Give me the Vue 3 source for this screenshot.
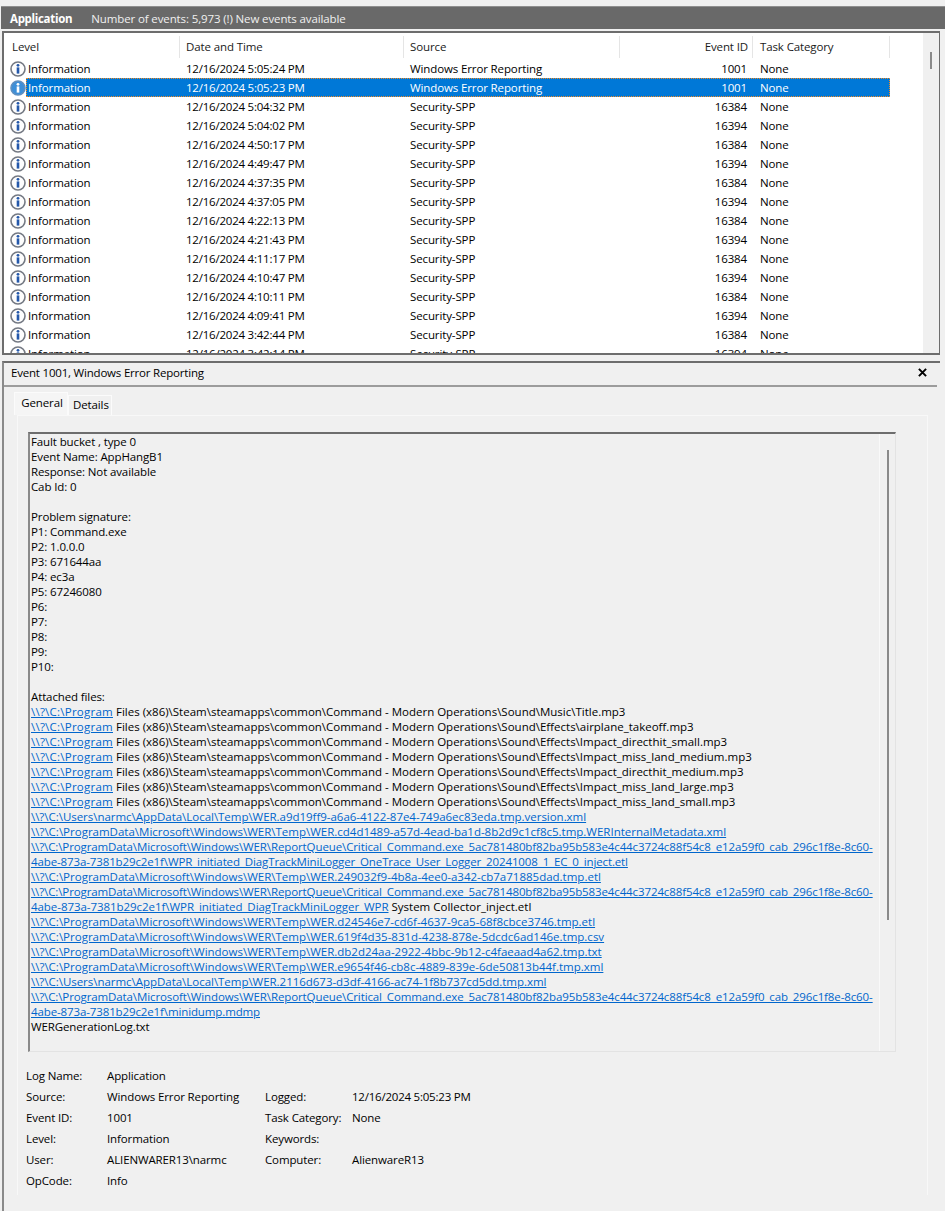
<template>
  <div class="viewer">
    <div class="log-bar">
      <strong>Application</strong>
      <span>Number of events: 5,973 (!) New events available</span>
    </div>

    <div class="list-box">
      <div class="list-main">
        <div class="list-head">
          <div class="col level">Level</div>
          <div class="col date">Date and Time</div>
          <div class="col source">Source</div>
          <div class="col id">Event ID</div>
          <div class="col task">Task Category</div>
        </div>
        <div class="list-rows">
          <div v-for="(e, i) in events" :key="i" class="row" :class="{ selected: i === 1 }">
            <svg class="info" viewBox="0 0 16 16" width="16" height="16">
              <circle cx="8" cy="8" r="7" class="info-ring" />
              <circle cx="8" cy="4.3" r="1.4" class="info-i" />
              <rect x="6.7" y="6.4" width="2.6" height="6.2" class="info-i" />
            </svg>
            <div class="cells">
              <div class="col level-text">Information</div>
              <div class="col date stamp">12/16/2024 {{ e.time }} PM</div>
              <div class="col source">{{ e.source }}</div>
              <div class="col id">{{ e.id }}</div>
              <div class="col task">None</div>
            </div>
          </div>
        </div>
      </div>
      <div class="list-scroll"><div class="list-thumb"></div></div>
    </div>

    <div class="detail">
      <div class="detail-title">
        <span>Event 1001, Windows Error Reporting</span>
        <svg viewBox="0 0 10 10" width="9" height="9" class="close">
          <path d="M1 1 L9 9 M9 1 L1 9" stroke="#000" stroke-width="2.2" fill="none" />
        </svg>
      </div>

      <div class="tabs">
        <div class="tab active">General</div>
        <div class="tab">Details</div>
      </div>

      <div class="tab-panel">
        <div class="text-box">
          <div class="text-lines">
            <div v-for="(l, i) in lines" :key="i" class="line" :class="l.kind">
              <a v-if="l.link">{{ l.link }}</a><span v-if="l.text">{{ l.text }}</span>
            </div>
          </div>
          <div class="text-scroll"><div class="text-thumb"></div></div>
        </div>

        <div class="props">
          <template v-for="p in props" :key="p[0]">
            <div>{{ p[0] }}</div>
            <div>{{ p[1] }}</div>
            <div>{{ p[2] }}</div>
            <div :class="{ stamp: p[3].includes('/') }">{{ p[3] }}</div>
          </template>
        </div>
      </div>
    </div>
  </div>
</template>

<script setup>
const WER = 'Windows Error Reporting'
const SPP = 'Security-SPP'
const events = [
  { time: '5:05:24', source: WER, id: 1001 },
  { time: '5:05:23', source: WER, id: 1001 },
  { time: '5:04:32', source: SPP, id: 16384 },
  { time: '5:04:02', source: SPP, id: 16394 },
  { time: '4:50:17', source: SPP, id: 16384 },
  { time: '4:49:47', source: SPP, id: 16394 },
  { time: '4:37:35', source: SPP, id: 16384 },
  { time: '4:37:05', source: SPP, id: 16394 },
  { time: '4:22:13', source: SPP, id: 16384 },
  { time: '4:21:43', source: SPP, id: 16394 },
  { time: '4:11:17', source: SPP, id: 16384 },
  { time: '4:10:47', source: SPP, id: 16394 },
  { time: '4:10:11', source: SPP, id: 16384 },
  { time: '4:09:41', source: SPP, id: 16394 },
  { time: '3:42:44', source: SPP, id: 16384 },
  { time: '3:42:14', source: SPP, id: 16394 },
]

const plain = (text) => ({ text })
const program = (rest) => ({
  kind: 'program',
  link: '\\\\?\\C:\\Program',
  text: ' Files (x86)\\Steam\\steamapps\\common\\Command - Modern Operations\\Sound\\' + rest,
})
const werTemp = (s) => ({ kind: 'wer', link: '\\\\?\\C:\\ProgramData\\Microsoft\\Windows\\WER\\Temp\\' + s })
const userTemp = (s) => ({ kind: 'user', link: '\\\\?\\C:\\Users\\narmc\\AppData\\Local\\Temp\\' + s })
const critical = {
  kind: 'critical',
  link: '\\\\?\\C:\\ProgramData\\Microsoft\\Windows\\WER\\ReportQueue\\Critical_Command.exe_5ac781480bf82ba95b583e4c44c3724c88f54c8_e12a59f0_cab_296c1f8e-8c60-',
}

const lines = [
  plain('Fault bucket , type 0'),
  plain('Event Name: AppHangB1'),
  plain('Response: Not available'),
  plain('Cab Id: 0'),
  plain('\u00a0'),
  plain('Problem signature:'),
  plain('P1: Command.exe'),
  plain('P2: 1.0.0.0'),
  plain('P3: 671644aa'),
  plain('P4: ec3a'),
  plain('P5: 67246080'),
  plain('P6:'),
  plain('P7:'),
  plain('P8:'),
  plain('P9:'),
  plain('P10:'),
  plain('\u00a0'),
  plain('Attached files:'),
  program('Music\\Title.mp3'),
  program('Effects\\airplane_takeoff.mp3'),
  program('Effects\\Impact_directhit_small.mp3'),
  program('Effects\\Impact_miss_land_medium.mp3'),
  program('Effects\\Impact_directhit_medium.mp3'),
  program('Effects\\Impact_miss_land_large.mp3'),
  program('Effects\\Impact_miss_land_small.mp3'),
  userTemp('WER.a9d19ff9-a6a6-4122-87e4-749a6ec83eda.tmp.version.xml'),
  werTemp('WER.cd4d1489-a57d-4ead-ba1d-8b2d9c1cf8c5.tmp.WERInternalMetadata.xml'),
  critical,
  { link: '4abe-873a-7381b29c2e1f\\WPR_initiated_DiagTrackMiniLogger_OneTrace_User_Logger_20241008_1_EC_0_inject.etl' },
  werTemp('WER.249032f9-4b8a-4ee0-a342-cb7a71885dad.tmp.etl'),
  critical,
  { kind: 'collector', link: '4abe-873a-7381b29c2e1f\\WPR_initiated_DiagTrackMiniLogger_WPR', text: ' System Collector_inject.etl' },
  werTemp('WER.d24546e7-cd6f-4637-9ca5-68f8cbce3746.tmp.etl'),
  werTemp('WER.619f4d35-831d-4238-878e-5dcdc6ad146e.tmp.csv'),
  werTemp('WER.db2d24aa-2922-4bbc-9b12-c4faeaad4a62.tmp.txt'),
  werTemp('WER.e9654f46-cb8c-4889-839e-6de50813b44f.tmp.xml'),
  userTemp('WER.2116d673-d3df-4166-ac74-1f8b737cd5dd.tmp.xml'),
  critical,
  { link: '4abe-873a-7381b29c2e1f\\minidump.mdmp' },
  plain('WERGenerationLog.txt'),
]

const props = [
  ['Log Name:', 'Application', '', ''],
  ['Source:', WER, 'Logged:', '12/16/2024 5:05:23 PM'],
  ['Event ID:', '1001', 'Task Category:', 'None'],
  ['Level:', 'Information', 'Keywords:', ''],
  ['User:', 'ALIENWARER13\\narmc', 'Computer:', 'AlienwareR13'],
  ['OpCode:', 'Info', '', ''],
]
</script>

<style>
html, body { margin: 0; background: #f0f0f0; }
</style>

<style scoped>
.viewer {
  width: 945px;
  height: 1211px;
  overflow: hidden;
  background: #f0f0f0;
  color: #000;
  font-family: "Open Sans", "Noto Sans", sans-serif;
  font-size: 11.5px;
  letter-spacing: -0.12px;
  padding-top: 6px;
  box-sizing: border-box;
}
.log-bar {
  height: 23px;
  margin-left: 1px;
  background: #696969;
  border-top: 1px solid #8f8f8f;
  box-sizing: border-box;
  color: #f0f0f0;
  display: flex;
  align-items: center;
  gap: 19px;
  padding-left: 9px;
}
.log-bar strong { font-weight: 700; color: #fff; letter-spacing: -0.3px; }

.list-box {
  margin: 2px 5px 0 2px;
  height: 324px;
  box-sizing: border-box;
  display: flex;
  background: #fff;
  border: 2px solid #6d6d6d;
  border-right-width: 1px;
}
.list-main { width: 919px; overflow: hidden; }
.list-head { display: flex; height: 26px; padding: 3px 0 0 1px; box-sizing: border-box; color: #1a1a1a; }
.list-head .col { border-right: 1px solid #e5e5e5; height: 22px; line-height: 22px; padding-left: 7px; box-sizing: border-box; }
.col { flex: none; white-space: nowrap; box-sizing: border-box; }
.level { width: 175px; }
.date { width: 224px; padding-left: 7px; }
.source { width: 216px; padding-left: 5px; }
.id { width: 133px; text-align: right; padding-right: 5px; }
.task { width: 137px; padding-left: 7px; }
.list-head .date { padding-left: 6px; }
.list-head .source { padding-left: 6px; }
.list-head .id { padding-left: 0; padding-right: 4px; }
.stamp { letter-spacing: -0.22px; }

.list-rows { height: 294px; overflow: hidden; }
.row { display: flex; align-items: center; height: 19px; padding-left: 6px; }
.info { flex: none; width: 16px; height: 16px; }
.info-ring { fill: #fdfdfd; stroke: #747983; stroke-width: 1.6; }
.info-i { fill: #2458ab; }
.cells { display: flex; flex: none; line-height: 18px; height: 19px; align-items: center; box-sizing: border-box; border: 1px solid transparent; width: 864px; }
.level-text { width: 152px; padding-left: 1px; }
.cells .source { width: 216px; padding-left: 7px; }
.cells .task { width: 137px; padding-left: 8px; }
.selected .cells { background: #0078d7; color: #fff; border: 1px dotted #f08a24; }
.selected .info-ring { fill: #3d8fd8; stroke: #5f8fc0; }
.selected .info-i { fill: #fff; }

.list-scroll { flex: 1; background: #f0f0f0; display: flex; justify-content: center; padding-top: 19px; }
.list-thumb { width: 2px; height: 17px; background: #8a8a8a; }

.detail {
  margin: 6px 5px 0 2px;
  border-top: 2px solid #6d6d6d;
  border-left: 2px solid #8a8a8a;
  height: 850px;
  box-sizing: border-box;
}
.detail-title {
  height: 18px;
  margin-right: 3px;
  border-bottom: 2px solid #9c9c9c;
  box-sizing: content-box;
  display: flex;
  align-items: center;
  justify-content: space-between;
  padding: 0 10px 4px 7px;
  letter-spacing: -0.2px;
}
.close { flex: none; }

.tabs { display: flex; margin: 5px 0 0 10px; align-items: flex-end; height: 23px; }
.tab { height: 20px; line-height: 17px; padding: 0 6px 0 4px; width: 44px; text-align: center; box-sizing: border-box; border: 1px solid #fbfbfb; border-bottom: none; }
.tab.active { height: 23px; width: 54px; line-height: 20px; padding: 0 4px 0 6px; background: #f5f5f5; }

.tab-panel {
  margin-left: 13px;
  width: 911px;
  box-sizing: border-box;
  border: 1px solid #f8f8f8;
  border-bottom: none;
  height: 780px;
  padding: 16px 0 0 10px;
}
.text-box {
  width: 868px;
  height: 620px;
  box-sizing: border-box;
  border-top: 2px solid #6d6d6d;
  border-left: 2px solid #8a8a8a;
  border-right: 1px solid #e3e3e3;
  border-bottom: 1px solid #e3e3e3;
  display: flex;
}
.text-lines { width: 849px; box-sizing: border-box; padding: 0 0 0 1px; }
.line { height: 15px; line-height: 15px; white-space: nowrap; }
.line a { color: #0066cc; text-decoration: underline; }
.line span { white-space: pre; }
.program a { letter-spacing: 0.24px; }
.program span { letter-spacing: 0; }
.wer a { letter-spacing: 0; }
.user a { letter-spacing: -0.03px; }
.critical a { letter-spacing: -0.11px; }
.collector a { letter-spacing: -0.05px; }
.collector span { letter-spacing: 0; }
.text-scroll { flex: 1; border-left: 1px solid #f9f9f9; display: flex; justify-content: center; padding-top: 16px; }
.text-thumb { width: 2px; height: 470px; background: #8a8a8a; }

.props {
  display: grid;
  grid-template-columns: 81px 158px 87px 1fr;
  grid-auto-rows: 21px;
  line-height: 21px;
  margin: 13px 0 0 -2px;
  white-space: nowrap;
}
</style>
